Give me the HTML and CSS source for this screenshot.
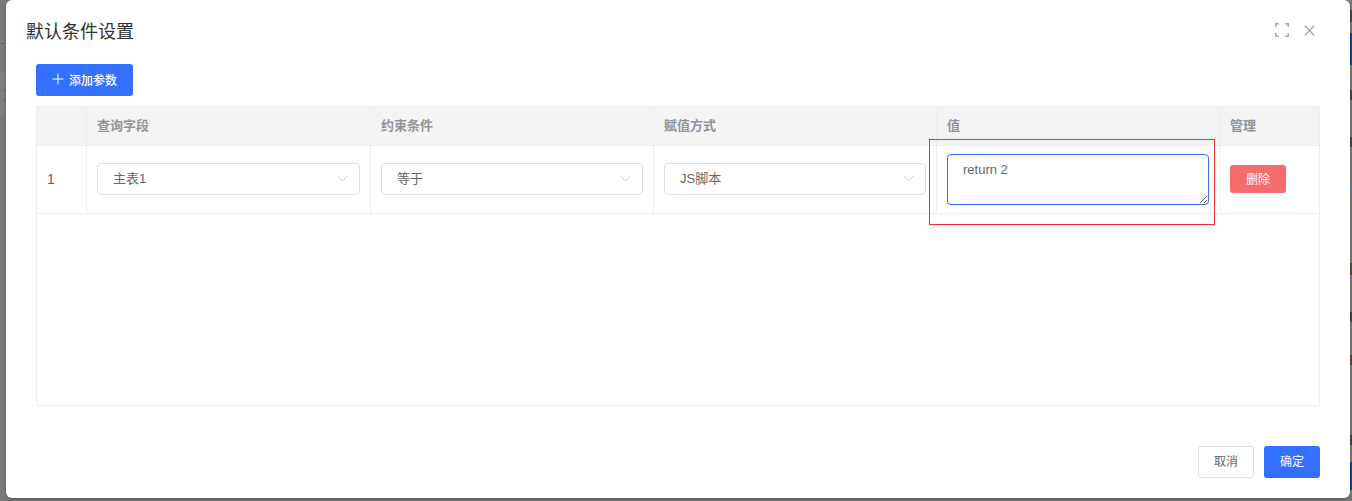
FILE: index.html
```html
<!DOCTYPE html>
<html lang="zh-CN">
<head>
<meta charset="utf-8">
<title>默认条件设置</title>
<link rel="stylesheet" href="styles.css">
</head>
<body>
<div class="backdrop-left"></div>
<div class="backdrop-right"></div>
<section class="modal">
  <header class="modal-header">
    <h1 class="modal-title">默认条件设置</h1>
    <div class="modal-tools">
      <svg class="tool-icon" width="14" height="14" viewBox="0 0 14 14" fill="none" stroke="#a8abb2" stroke-width="1.6"><path d="M.8 4V.8H4M10 .8h3.200V4M13.200 10v3.200H10M4 13.200H.8V10"/></svg>
      <svg class="tool-icon" width="11" height="11" viewBox="0 0 12 12" fill="none" stroke="#8f9298" stroke-width="1.2"><path d="M.8.8l10.400 10.400M11.200.8L.8 11.200"/></svg>
    </div>
  </header>
  <div class="modal-body">
    <button class="btn btn-primary btn-add" type="button">
      <svg width="12" height="12" viewBox="0 0 12 12" fill="none" stroke="#fff" stroke-width="1"><path d="M6 .5v11M.5 6h11"/></svg>
      <span>添加参数</span>
    </button>
    <div class="table">
      <div class="row row-head">
        <div class="cell"></div>
        <div class="cell">查询字段</div>
        <div class="cell">约束条件</div>
        <div class="cell">赋值方式</div>
        <div class="cell">值</div>
        <div class="cell">管理</div>
      </div>
      <div class="row row-data">
        <div class="cell cell-index">1</div>
        <div class="cell">
          <div class="select"><span>主表1</span><svg width="11" height="7" viewBox="0 0 12 7" fill="none" stroke="#c6c8ce" stroke-width="1"><path d="M.5.5L6 6l5.500-5.500"/></svg></div>
        </div>
        <div class="cell">
          <div class="select"><span>等于</span><svg width="11" height="7" viewBox="0 0 12 7" fill="none" stroke="#c6c8ce" stroke-width="1"><path d="M.5.5L6 6l5.500-5.500"/></svg></div>
        </div>
        <div class="cell">
          <div class="select"><span>JS脚本</span><svg width="11" height="7" viewBox="0 0 12 7" fill="none" stroke="#c6c8ce" stroke-width="1"><path d="M.5.5L6 6l5.500-5.500"/></svg></div>
        </div>
        <div class="cell">
          <textarea class="value-input">return 2</textarea>
        </div>
        <div class="cell">
          <button class="btn btn-danger" type="button">删除</button>
        </div>
      </div>
    </div>
  </div>
  <footer class="modal-footer">
    <button class="btn btn-default" type="button">取消</button>
    <button class="btn btn-primary btn-ok" type="button">确定</button>
  </footer>
  <div class="highlight-box"></div>
</section>
</body>
</html>
```
FILE: styles.css
```css
* { box-sizing: border-box; }
html, body { height: 100%; }
body {
  margin: 0;
  background: #7a7a7a;
  overflow: hidden;
  font-family: "Liberation Sans", "Noto Sans CJK SC", sans-serif;
  position: relative;
}
.backdrop-left {
  position: absolute;
  left: 0;
  top: 0;
  width: 6px;
  height: 115px;
  background:
    linear-gradient(#555, #555) no-repeat 1px 43px / 3px 1px,
    linear-gradient(#5c5c5c, #5c5c5c) no-repeat 4px 90px / 2px 1px,
    linear-gradient(#5c5c5c, #5c5c5c) no-repeat 4px 99px / 2px 1px,
    linear-gradient(#7a7a7a 0 73px, #808080 73px 115px);
}
.backdrop-right {
  position: absolute;
  right: 0;
  top: 0;
  width: 2px;
  height: 501px;
  background: linear-gradient(#7a7a7a 0 10px, #45474d 10px 22px, #7a7a7a 22px 33px, #1f3f8f 33px 65px, #7a7a7a 65px 90px, #45474d 90px 100px, #7a7a7a 100px 137px, #45474d 137px 147px, #7a7a7a 147px 183px, #5f7f9f 183px 195px, #7a7a7a 195px 263px, #5c4d38 263px 275px, #7a7a7a 275px 312px, #45474d 312px 322px, #7a7a7a 322px 355px, #5c4d38 355px 365px, #7a7a7a 365px 435px, #45474d 435px 445px, #7a7a7a 445px 462px, #1f3f8f 462px 490px, #7a7a7a 490px);
}
.modal {
  position: relative;
  margin-left: 6px;
  width: 1344px;
  height: 498px;
  background: #fff;
  border-radius: 6px;
  box-shadow: 0 1px 3px rgba(0, 0, 0, 0.35);
  display: flex;
  flex-direction: column;
}
.modal-header {
  height: 64px;
  flex: none;
  padding: 0 35px 4px 20px;
  display: flex;
  align-items: center;
  justify-content: space-between;
}
.modal-title {
  margin: 0;
  font-size: 18px;
  font-weight: 400;
  color: #303133;
}
.modal-tools {
  display: flex;
  align-items: center;
  gap: 15px;
}
.tool-icon { display: block; }
.modal-body {
  flex: 1;
  padding: 0 30px;
}
.btn {
  border: 0;
  border-radius: 3px;
  font-family: inherit;
  font-size: 12px;
  cursor: pointer;
  padding: 0;
}
.btn-primary {
  background: #3370ff;
  color: #fff;
}
.btn-add {
  width: 97px;
  height: 32px;
  padding-bottom: 2px;
  display: flex;
  align-items: center;
  justify-content: center;
  gap: 5px;
  font-weight: 500;
}
.btn-add svg { display: block; }
.table {
  margin-top: 10px;
  height: 300px;
  border: 1px solid #ebeef5;
}
.row {
  display: grid;
  grid-template-columns: 50px 284px 283px 283px 283px 1fr;
  border-bottom: 1px solid #ebeef5;
  font-size: 13px;
}
.row-head {
  height: 39px;
  background: #f4f4f5;
  color: #909399;
  font-weight: 700;
}
.row-head .cell { padding-bottom: 4px; }
.row-data {
  height: 68px;
  color: #666;
}
.cell {
  display: flex;
  align-items: center;
  padding: 0 10px;
  border-right: 1px solid #ebeef5;
  min-width: 0;
}
.cell:last-child { border-right: 0; }
.cell-index {
  padding-bottom: 2px;
  font-size: 14px;
}
.select {
  width: 100%;
  height: 32px;
  margin-bottom: 2px;
  border: 1px solid #dcdfe6;
  border-radius: 4px;
  padding: 0 11px 0 15px;
  display: flex;
  align-items: center;
  justify-content: space-between;
  color: #666;
}
.select span { padding-bottom: 2px; }
.select svg { display: block; }
.value-input {
  display: block;
  width: 100%;
  height: 51px;
  border: 1px solid #3370ff;
  border-radius: 4px;
  padding: 7px 15px;
  margin: 0;
  font-family: inherit;
  font-size: 13px;
  line-height: 16px;
  color: #666;
  outline: 0;
}
.btn-danger {
  width: 56px;
  height: 28px;
  margin-bottom: 2px;
  background: #f56c6c;
  color: #fff;
}
.modal-footer {
  flex: none;
  height: 52px;
  padding: 0 30px 20px;
  display: flex;
  justify-content: flex-end;
  gap: 10px;
}
.modal-footer .btn {
  width: 56px;
  height: 32px;
  padding-bottom: 3px;
}
.btn-default {
  background: #fff;
  border: 1px solid #dcdfe6;
  color: #666;
}
.highlight-box {
  position: absolute;
  left: 923px;
  top: 139px;
  width: 286px;
  height: 86px;
  border: 1px solid #f52f2f;
  pointer-events: none;
}
```
